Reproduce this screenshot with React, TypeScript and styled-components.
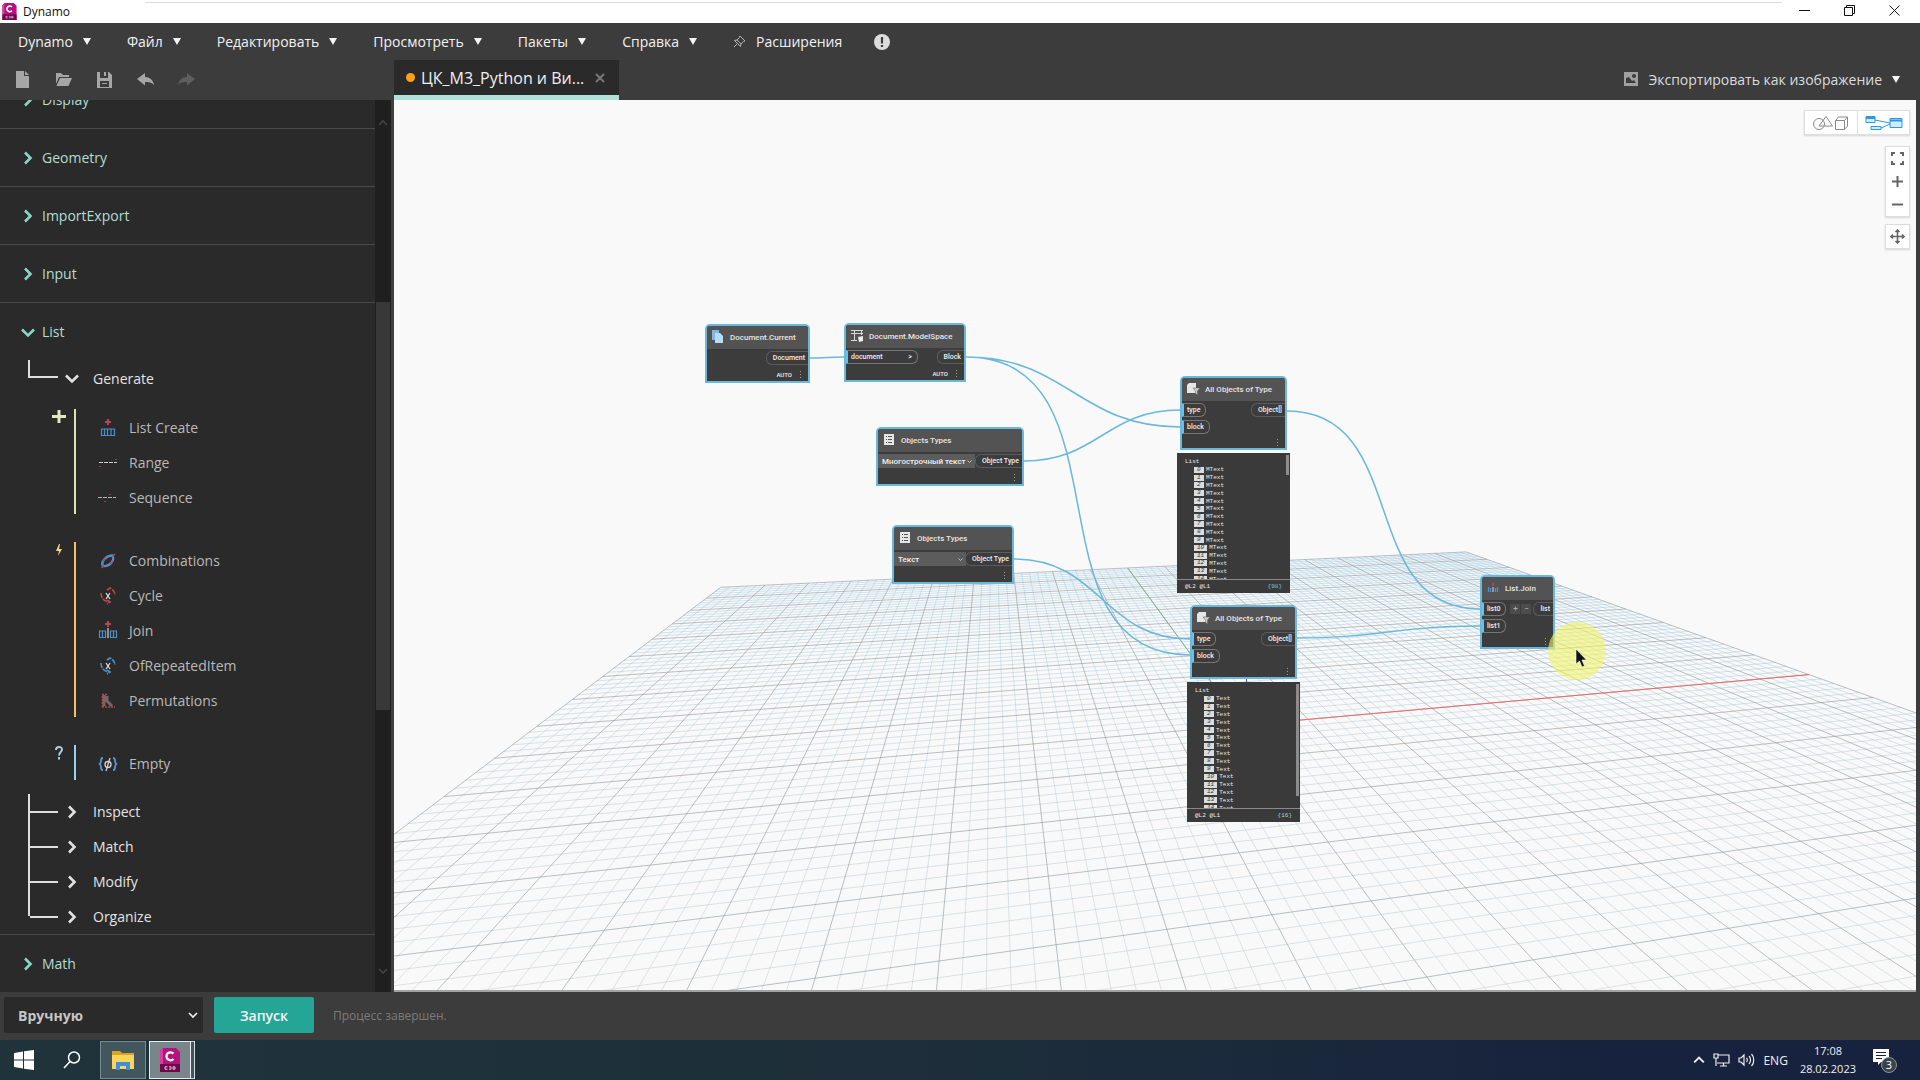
import React from "react";
import styled, { createGlobalStyle } from "styled-components";

const ui = `"Open Sans", "Noto Sans", sans-serif`;
const condensed = `Roboto, "Noto Sans", sans-serif`;
const mono = `"Liberation Mono", monospace`;
const blue = "#6ab8dc";

const GlobalStyle = createGlobalStyle`
  *, *::before, *::after { box-sizing: border-box; }
  body { margin: 0; background: #3c3c3c; font-family: ${ui}; }
  button, select { font: inherit; color: inherit; border: 0; padding: 0; margin: 0; background: none; }
  ul { list-style: none; margin: 0; padding: 0; }
  svg { display: block; flex: none; }
`;

const Page = styled.div`
  display: flex;
  flex-direction: column;
  height: 100vh;
  overflow: hidden;
`;

/* ---------- window frame ---------- */

const TitleBar = styled.div`
  display: flex;
  align-items: stretch;
  height: 23px;
  flex: none;
  background: #fff;
  color: #111;
  font-size: 12px;
`;
const AppName = styled.div`
  display: flex;
  align-items: center;
  gap: 6px;
  width: 145px;
  flex: none;
  padding-left: 2px;
`;
const TitleLine = styled.div`
  flex: 1;
  border-bottom: 1px solid #dcdcdc;
  height: 3px;
`;
const WindowButtons = styled.div`
  display: flex;
  padding-right: 3px;
`;
const WindowButton = styled.button`
  display: grid;
  place-items: center;
  width: 45px;
  padding-bottom: 3px;
`;

/* ---------- header ---------- */

const MenuBar = styled.nav`
  display: flex;
  align-items: center;
  height: 37px;
  flex: none;
  padding-left: 18px;
  gap: 36px;
  color: #f2f2f2;
  font-size: 14px;
`;
const MenuExtras = styled.div`
  display: flex;
  align-items: center;
  gap: 32px;
`;
const MenuButton = styled.button`
  display: flex;
  align-items: center;
  gap: 10px;
`;
const Caret = styled.span`
  border: 4px solid transparent;
  border-top: 7px solid #f4f4f4;
  border-bottom: 0;
`;
const ToolRow = styled.div`
  display: flex;
  height: 40px;
  flex: none;
`;
const Tools = styled.div`
  display: flex;
  align-items: center;
  gap: 24px;
  width: 394px;
  padding: 0 0 2px 14px;
`;
const ToolButton = styled.button`
  display: grid;
  place-items: center;
  width: 17px;
  height: 20px;
`;
const Tab = styled.div`
  display: flex;
  align-items: center;
  width: 225px;
  padding-left: 12px;
  gap: 6px;
  background: #2a2a2a;
  border-bottom: 5px solid #b0e1d6;
  color: #f0f0f0;
  font-size: 16px;
`;
const Dot = styled.span`
  width: 9px;
  height: 9px;
  border-radius: 50%;
  background: #f9a11b;
`;
const TabName = styled.span`
  flex: none;
  width: 168px;
  white-space: nowrap;
`;
const ExportButton = styled.button`
  display: flex;
  align-items: center;
  gap: 10px;
  margin-left: auto;
  padding: 0 20px 2px 0;
  color: #dcdcdc;
  font-size: 14px;
`;

/* ---------- library ---------- */

const Work = styled.div`
  display: flex;
  flex: 1;
  min-height: 0;
`;
const Library = styled.aside`
  display: flex;
  width: 394px;
  flex: none;
  background: #2a2a2a;
  border-right: 3px solid #3f3f3f;
  overflow: hidden;
`;
const LibraryList = styled.div`
  flex: 1;
  margin-top: -29px;
`;
const Category = styled.button<{ $open?: boolean }>`
  display: flex;
  align-items: center;
  gap: 7px;
  width: 100%;
  height: 58px;
  padding-left: 21px;
  border-bottom: 1px solid ${(p) => (p.$open ? "transparent" : "#4a4a4a")};
  color: #b3ddd3;
  font-size: 14px;
`;
const Branch = styled.button`
  display: flex;
  align-items: center;
  gap: 14px;
  width: 100%;
  height: 35px;
  color: #e4e4e4;
  font-size: 14px;
`;
const Generate = styled(Branch)`
  height: 34px;
  padding-left: 28px;
`;
const Elbow = styled.span`
  width: 30px;
  height: 18px;
  margin: 0 -7px 18px 0;
  border-left: 2px solid #dedede;
  border-bottom: 2px solid #dedede;
`;
const NodeGroup = styled.section<{ $first?: boolean }>`
  display: flex;
  margin-top: ${(p) => (p.$first ? 14 : 28)}px;
  padding-left: 51px;
`;
const GroupMark = styled.div`
  width: 23px;
`;
const GroupItems = styled.ul<{ $tone: string }>`
  flex: 1;
  border-left: 2px solid ${(p) => p.$tone};
`;
const GroupItem = styled.li`
  height: 35px;
  padding-left: 22px;
`;
const ItemButton = styled.button`
  display: flex;
  align-items: center;
  gap: 11px;
  height: 37px;
  color: #b9b9b9;
  font-size: 14px;
`;
const Branches = styled.ul`
  margin-top: 14px;
  padding-left: 28px;
  border-bottom: 1px solid #4a4a4a;
`;
const BranchRow = styled.li`
  border-left: 2px solid #dedede;
  &:last-child { border-image: linear-gradient(#dedede 50%, transparent 50%) 1; }
`;
const Twig = styled.span`
  width: 28px;
  height: 2px;
  margin-right: -7px;
  background: #dedede;
`;
const ScrollTrack = styled.div`
  display: flex;
  flex-direction: column;
  align-items: center;
  justify-content: space-between;
  width: 16px;
  padding: 18px 0 16px;
  background: #1f1f1f;
`;
const ScrollThumb = styled.div`
  width: 14px;
  height: 408px;
  margin: 0 0 82px;
  background: #383838;
`;

/* ---------- workspace ---------- */

const Workspace = styled.main`
  position: relative;
  flex: 1;
  margin-right: 4px;
  background: #f9f9f9;
  border-bottom: 2px solid #a3a3a3;
  overflow: hidden;
`;
const Backdrop = styled.svg`
  position: absolute;
  inset: 0;
`;
const Placed = styled.div<{ $x: number; $y: number }>`
  position: absolute;
  left: ${(p) => p.$x}px;
  top: ${(p) => p.$y}px;
`;
const NodeBox = styled(Placed)<{ $w: number }>`
  width: ${(p) => p.$w}px;
  background: #3c3c3c;
  border: 2px solid ${blue};
  border-radius: 5px 5px 0 0;
  color: #f0f0f0;
  font-family: ${condensed};
  font-size: 7px;
  font-weight: 500;
`;
const NodeTitle = styled.div`
  display: flex;
  align-items: center;
  gap: 5px;
  height: 23px;
  padding: 0 0 1px 5px;
  background: #535353;
  border-radius: 3px 3px 0 0;
  color: #e6e6e6;
  font-size: 8px;
  white-space: nowrap;
`;
const NodeBody = styled.div`
  display: grid;
  gap: 3px;
  padding-top: 2px;
`;
const PortRow = styled.div`
  display: flex;
  align-items: center;
  height: 14px;
`;
const InPort = styled.span<{ $wide?: boolean }>`
  display: flex;
  align-items: center;
  justify-content: space-between;
  height: 14px;
  width: ${(p) => (p.$wide ? "72px" : "auto")};
  padding: 0 5px 0 3px;
  border: 1px solid #777;
  border-left: 2px solid #6ac0ea;
  border-radius: 0 6px 6px 0;
`;
const OutPort = styled.span`
  display: flex;
  align-items: center;
  height: 14px;
  margin-left: auto;
  padding: 0 3px 0 6px;
  border: 1px solid #5c5c5c;
  border-right: 0;
  border-radius: 6px 0 0 6px;
  white-space: nowrap;
`;
const NodeSelect = styled.select<{ $w: number }>`
  appearance: none;
  width: ${(p) => p.$w}px;
  height: 14px;
  padding: 0 4px;
  background: #5c5c5c;
  font-size: 8px;
`;
const SelectWrap = styled.span`
  display: flex;
  align-items: center;
  svg { margin-left: -8px; pointer-events: none; }
`;
const NodeFoot = styled.div<{ $short?: boolean }>`
  display: flex;
  align-items: center;
  justify-content: flex-end;
  gap: 8px;
  height: ${(p) => (p.$short ? 11 : 13)}px;
  padding-right: 6px;
  font-size: 6px;
`;
const ListButtons = styled.span`
  display: flex;
  gap: 1px;
  margin-left: 4px;
`;
const ListButton = styled.button`
  width: 10px;
  height: 10px;
  background: #4c4c4c;
  color: #aaa;
  font-size: 8px;
  line-height: 8px;
`;

const Watch = styled(Placed)`
  width: 113px;
  background: #3a3a3a;
  color: #ececec;
  font-family: ${mono};
  font-size: 6px;
  line-height: 8px;
`;
const WatchBody = styled.div`
  display: flex;
  justify-content: space-between;
  height: 127px;
  padding: 2px 1px 0 8px;
  border-bottom: 1px solid #8a8a8a;
  overflow: hidden;
`;
const WatchList = styled.div`
  padding-top: 3px;
`;
const WatchItems = styled.ul`
  display: grid;
  grid-auto-rows: 1fr;
  height: 117px;
  padding-left: 9px;
  line-height: 7px;
`;
const WatchItem = styled.li`
  display: flex;
  align-items: center;
  gap: 2px;
`;
const Index = styled.span`
  min-width: 10px;
  padding: 0 3px;
  background: #dcdcdc;
  color: #333;
  font-style: italic;
  line-height: 6px;
`;
const WatchThumb = styled.span<{ $h: number }>`
  width: 3px;
  height: ${(p) => p.$h}px;
  background: #8c8c8c;
`;
const WatchFoot = styled.div`
  display: flex;
  justify-content: space-between;
  align-items: center;
  height: 13px;
  padding: 0 8px;
`;
const Count = styled.span<{ $tone: string }>`
  color: ${(p) => p.$tone};
`;

const Overlay = styled.div`
  position: absolute;
  top: 10px;
  right: 6px;
  display: flex;
  flex-direction: column;
  align-items: flex-end;
`;
const Panel = styled.div<{ $column?: boolean; $gap: number }>`
  display: flex;
  flex-direction: ${(p) => (p.$column ? "column" : "row")};
  margin-bottom: ${(p) => p.$gap}px;
  background: #fff;
  border: 1px solid #dedede;
  box-shadow: 0 1px 2px rgba(0, 0, 0, 0.15);
`;
const ViewButton = styled.button`
  display: grid;
  place-items: center;
  width: 52px;
  height: 23px;
  & + & { border-left: 1px solid #dedede; }
`;
const ZoomButton = styled.button`
  display: grid;
  place-items: center;
  width: 23px;
  height: 23px;
`;

/* ---------- run bar and taskbar ---------- */

const RunBar = styled.div`
  display: flex;
  align-items: center;
  height: 48px;
  flex: none;
  padding: 0 0 2px 4px;
  background: #3c3c3c;
`;
const RunMode = styled.span`
  display: flex;
  align-items: center;
  margin-right: 16px;
  svg { margin-left: -15px; pointer-events: none; }
`;
const RunSelect = styled.select`
  appearance: none;
  width: 199px;
  height: 36px;
  padding: 0 14px;
  background: #2a2a2a;
  border-radius: 2px;
  color: #c6c6c6;
  font-size: 14px;
  font-weight: 700;
`;
const RunButton = styled.button`
  width: 100px;
  height: 36px;
  background: #25a596;
  border-radius: 2px;
  color: #f4f4f4;
  font-size: 14px;
  font-weight: 600;
`;
const Status = styled.span`
  margin-left: 19px;
  color: #7b7b7b;
  font-size: 12px;
`;
const Taskbar = styled.footer`
  display: flex;
  align-items: stretch;
  height: 40px;
  flex: none;
  background: linear-gradient(90deg, #20333a, #1d2e3a 50%, #17223e 85%);
  color: #f0f0f0;
  font-size: 12px;
`;
const TaskButton = styled.button<{ $state?: "open" | "active" }>`
  display: grid;
  place-items: center;
  width: ${(p) => (p.$state === "open" ? 46 : p.$state === "active" ? 42 : 48)}px;
  margin: 1px ${(p) => (p.$state === "open" ? 3 : 0)}px 1px ${(p) => (p.$state === "open" ? 4 : 0)}px;
  background: ${(p) => (p.$state === "open" ? "#43555d" : p.$state === "active" ? "#78868c" : "none")};
  border: ${(p) => (p.$state === "open" ? "1px solid #7c8a90" : p.$state === "active" ? "1px solid #e8ecee" : "0")};
`;
const StackEdge = styled.span`
  width: 4px;
  margin: 1px 0;
  border: 1px solid #d5dadd;
  border-left: 0;
  background: #43555d;
`;
const Tray = styled.div`
  display: flex;
  align-items: center;
  gap: 8px;
  margin-left: auto;
  padding-right: 23px;
`;
const Clock = styled.div`
  margin: 0 8px 0 4px;
  font-size: 11px;
  line-height: 18px;
  text-align: center;
`;

/* ---------- icons ---------- */

const Chevron = ({ open, tone = "#e2e2e2" }: { open?: boolean; tone?: string }) => (
  <svg width="14" height="14" viewBox="0 0 14 14" fill="none" stroke={tone} strokeWidth="2.6">
    <path d={open ? "M1 4.5 7 10.5 13 4.5" : "M4 1.5 9.5 7 4 12.5"} />
  </svg>
);
const SmallChevron = ({ size, tone = "#eee", up }: { size: number; tone?: string; up?: boolean }) => (
  <svg width={size} height={size} viewBox="0 0 10 10" fill="none" stroke={tone} strokeWidth="1.7">
    <path d={up ? "M1 7 5 3 9 7" : "M1 3 5 7 9 3"} />
  </svg>
);

const CivilLogo = ({ w, h }: { w: number; h: number }) => (
  <svg width={w} height={h} viewBox="0 0 20 24">
    <path d="M3 0H16L20 4V24H0V3Z" fill="#b5127f" />
    <path d="M3 0V16H0V3Z" fill="#d83ba4" />
    <path d="M0 16H20V24H0Z" fill="#6d0849" />
    <path d="M13.4 5.6A4 4 0 1 0 13.4 11" fill="none" stroke="#fff" strokeWidth="2.3" />
    <path d="M5 18.8H7.5M5 18.8V21.2H7.5M9 18.8H11V21.2H9M13 18.8H15V21.2H13Z" fill="none" stroke="#eac4dc" strokeWidth="1" />
  </svg>
);

const toolIcons: Record<string, React.ReactNode> = {
  New: <path d="M2 1H10V6H15V18H2ZM11 1 15 5H11Z" fill="#a6a6a6" />,
  Open: <path d="M1 3H6L8 5H14V7H4L1 14ZM5 8H17L13.500 16H1.500Z" fill="#a6a6a6" />,
  Save: <path fillRule="evenodd" d="M1 2H13L16 5V18H1ZM4 2V8H12V2H10V6H8V2ZM4 11V17H13V11ZM6 13H11V14H6Z" fill="#a6a6a6" />,
  Undo: <path d="M0 9 8 3V7C13 7 16 10 17 15 14 12 12 12 8 12V15.500Z" fill="#a6a6a6" />,
  Redo: <path d="M17 9 9 3V7C4 7 1 10 0 15 3 12 5 12 9 12V15.500Z" fill="#5e5e5e" />,
};

const red = "#b8474e";
const navy = "#4f8fce";
const itemIcons: Record<string, React.ReactNode> = {
  "List Create": (
    <g fill="none">
      <path d="M10 1V7M7 4H13" stroke={red} strokeWidth="2" />
      <path d="M3 11H17M3.500 11V18M6.500 11V18M9.500 11V18M13 11V18M16.500 11V18M3 17.500H17" stroke={navy} strokeWidth="1.200" />
    </g>
  ),
  Range: (
    <g>
      <path d="M1 9.500H19" stroke="#cfcfcf" strokeDasharray="4 1" />
      <path d="M2 13V14M18 6V7" stroke={red} strokeWidth="1.500" />
    </g>
  ),
  Sequence: (
    <g>
      <path d="M0 9.500H18" stroke="#b5b5b5" strokeDasharray="4 1" />
      <path d="M7 13V14M12 6V7" stroke={red} strokeWidth="1.500" />
    </g>
  ),
  Combinations: (
    <g fill="none">
      <path d="M5 15C2.500 11 8 4.500 14.500 4.500 17 9 12 16 5 15Z" stroke={navy} strokeWidth="2.400" />
      <path d="M3.500 17 6 14M5 10 8 7M12 13 15 10M14 6 17 3" stroke={red} strokeWidth="1.400" />
    </g>
  ),
  Cycle: (
    <g fill="none">
      <path d="M9 4 12 2C16 4 17 7 17 9M3 7C3 12 6 15 11 16M9 14 12 16 9 18" stroke={red} strokeWidth="1.600" strokeDasharray="5 1" />
      <path d="M8 7 12 13M12 7 8 13" stroke="#e5e5e5" strokeWidth="1.200" />
    </g>
  ),
  Join: (
    <g fill="none">
      <path d="M10 0V6M7 3H13" stroke={red} strokeWidth="2" />
      <path d="M1 10H8M12 10H19M1.500 10V17M4.500 10V17M7.500 10V17M12.500 10V17M15.500 10V17M18.500 10V17M1 16.500H8M12 16.500H19" stroke={navy} strokeWidth="1.200" />
      <path d="M10 7V17" stroke="#d5d5d5" strokeWidth="1.200" />
    </g>
  ),
  OfRepeatedItem: (
    <g fill="none">
      <path d="M9 4 12 2C16 4 17 7 17 9M3 7C3 12 6 15 11 16M9 14 12 16 9 18" stroke={navy} strokeWidth="1.600" strokeDasharray="5 1" />
      <path d="M8 7 12 13M12 7 8 13" stroke="#e5e5e5" strokeWidth="1.200" />
    </g>
  ),
  Permutations: (
    <g fill="none">
      <path d="M6 4V15M9 5V10L14 15" stroke="#75676b" strokeWidth="3" />
      <path d="M4 3.500H10M4.500 5V16M4 16H17" stroke={red} strokeWidth="1.600" strokeDasharray="2 1" />
    </g>
  ),
  Empty: (
    <g fill="none">
      <path d="M5 4C1 4 5 9 1 10 5 11 1 16 5 16M15 4C19 4 15 9 19 10 15 11 19 16 15 16" stroke="#5596d3" strokeWidth="1.800" />
      <circle cx="10" cy="10.500" r="3" stroke="#d0d0d0" strokeWidth="1.300" />
      <path d="M12 4 8 17" stroke="#d0d0d0" strokeWidth="1.300" />
    </g>
  ),
};

const nodeIcons: Record<string, React.ReactNode> = {
  copy: (
    <g>
      <path d="M0 0H7V10H0Z" fill="#7fb7e6" />
      <path d="M3 3H8L11 6V13H3Z" fill="#b9dcf7" />
    </g>
  ),
  space: (
    <g>
      <path d="M0 1.500H12M0 4.500H12M3.500 1V12M10.500 1V6M0 11.500H6" stroke="#d8d8d8" fill="none" />
      <path d="M7 8 12 7V12L8 13Z" fill="#eee" />
    </g>
  ),
  types: (
    <g>
      <path d="M1 1H11V12H1Z" fill="#e6e6e6" />
      <path d="M3 3.500H4M3 6.500H4M3 9.500H4M5 3.500H9M5 6.500H9M5 9.500H9" stroke="#555" />
    </g>
  ),
  filter: (
    <g>
      <path d="M0 3 2 1H9V11H0Z" fill="#e6e6e6" />
      <path d="M6 6H13L10.500 9V13L8.500 11.500V9Z" fill="#cfcfcf" stroke="#535353" strokeWidth="0.500" />
    </g>
  ),
  join: (
    <g>
      <path d="M6 2V5" stroke="#c44" strokeWidth="1.500" />
      <path d="M1.500 6V11M3.500 7V11M8.500 7V11M10.500 6V11" stroke={navy} strokeWidth="1.300" />
      <path d="M6 6V11" stroke="#ddd" />
    </g>
  ),
};

/* ---------- background grid ---------- */

// Projects a ground-plane position, counted in major cells, onto the view.
const depth = (u: number, v: number) => 1 + 0.01015 * u - 0.0505 * v;
const project = (u: number, v: number) => {
  const w = depth(u, v);
  return `${((720.7 + 52.15 * u - 50.09 * v) / w).toFixed(1)} ${((587.3 + 3.83 * u - 19.3 * v) / w).toFixed(1)}`;
};
const alongV = (u: number, end = 20) =>
  `M${project(u, 0)}L${project(u, Math.min(end, (0.97 + 0.01015 * u) / 0.0505))}`;
const alongU = (v: number) =>
  `M${project(Math.max(0, (0.0505 * v - 0.97) / 0.01015), v)}L${project(20, v)}`;

const steps = Array.from({ length: 101 }, (_, i) => i);
const minor = steps.filter((i) => i % 5).map((i) => alongV(i / 5) + alongU(i / 5)).join("");
const major = steps.filter((i) => i % 5 === 0).map((i) => alongV(i / 5) + alongU(i / 5)).join("");

const wire = (x1: number, y1: number, x2: number, y2: number) => {
  const k = Math.hypot(x2 - x1, y2 - y1) * 0.45;
  return `M${x1} ${y1}C${x1 + k} ${y1} ${x2 - k} ${y2} ${x2} ${y2}`;
};
const wires = [
  wire(810, 358, 844, 357),
  wire(966, 357, 1180, 427),
  wire(966, 357, 1190, 655),
  wire(1024, 461, 1180, 410),
  wire(1014, 559, 1190, 639),
  wire(1287, 411, 1480, 609),
  wire(1296, 638, 1480, 626),
];

const Ground = () => (
  <Backdrop width="1522" height="892" viewBox="394 100 1522 892">
    <defs>
      <linearGradient id="minorTone" gradientUnits="userSpaceOnUse" x1="0" y1="550" x2="0" y2="990">
        <stop offset="0" stopColor="#8cc0de" stopOpacity="0.5" />
        <stop offset="0.4" stopColor="#a9c4d2" stopOpacity="0.55" />
        <stop offset="1" stopColor="#c4c9cc" stopOpacity="0.65" />
      </linearGradient>
    </defs>
    <path d={minor} stroke="url(#minorTone)" strokeWidth="0.800" fill="none" />
    <path d={major} stroke="#8b959a" strokeOpacity="0.650" strokeWidth="0.900" fill="none" />
    <path d={`M${project(10, 0)}L${project(10, 10)}`} stroke="#7fb58c" fill="none" />
    <path d={`M${project(10, 10)}L${project(20, 10)}`} stroke="#ea6a6a" fill="none" />
    <path d="M1246.500 670V724" stroke="#4a5fa0" fill="none" />
    <path d={wires.join("")} stroke={blue} strokeWidth="1.500" fill="none" />
  </Backdrop>
);

/* ---------- graph nodes ---------- */

type GraphNodeProps = {
  x: number; y: number; w: number; icon: string; title: string;
  auto?: boolean; tall?: boolean; children: React.ReactNode;
};
const GraphNode = ({ x, y, w, icon, title, auto, tall, children }: GraphNodeProps) => (
  <NodeBox $x={x - 394} $y={y - 100} $w={w}>
    <NodeTitle>
      <svg width="13" height="14" viewBox="0 0 13 14">{nodeIcons[icon]}</svg>
      {title}
    </NodeTitle>
    <NodeBody>
      {children}
      <NodeFoot $short={tall}>
        {auto && "AUTO"}
        <svg width="2" height="9" fill="#9a9a9a"><path d="M0 1H1V2H0ZM0 4H1V5H0ZM0 7H1V8H0Z" /></svg>
      </NodeFoot>
    </NodeBody>
  </NodeBox>
);

const TypeNode = ({ x, y, w, value, sw }: { x: number; y: number; w: number; value: string; sw: number }) => (
  <GraphNode x={x} y={y} w={w} icon="types" title="Objects Types">
    <PortRow>
      <SelectWrap>
        <NodeSelect $w={sw} aria-label="Object type" defaultValue={value}>
          <option>{value}</option>
        </NodeSelect>
        <SmallChevron size={5} tone="#ccc" />
      </SelectWrap>
      <OutPort>Object Type</OutPort>
    </PortRow>
  </GraphNode>
);

const FilterNode = ({ x, y }: { x: number; y: number }) => (
  <GraphNode x={x} y={y} w={107} icon="filter" title="All Objects of Type" tall>
    <PortRow><InPort>type</InPort><OutPort>Object[]</OutPort></PortRow>
    <PortRow><InPort>block</InPort></PortRow>
  </GraphNode>
);

const WatchPanel = ({ x, y, text, count, tone, thumb }: { x: number; y: number; text: string; count: number; tone: string; thumb: number }) => (
  <Watch $x={x - 394} $y={y - 100}>
    <WatchBody>
      <WatchList>
        List
        <WatchItems>
          {Array.from({ length: 15 }, (_, i) => (
            <WatchItem key={i}><Index>{i}</Index>{text}</WatchItem>
          ))}
        </WatchItems>
      </WatchList>
      <WatchThumb $h={thumb} />
    </WatchBody>
    <WatchFoot><span>@L2 @L1</span><Count $tone={tone}>{`{${count}}`}</Count></WatchFoot>
  </Watch>
);

/* ---------- library data ---------- */

const groups = [
  {
    tone: "#dce3b4",
    mark: <path d="M8 1V14M1 7.500H15" stroke="#e3e8bd" strokeWidth="3" />,
    items: ["List Create", "Range", "Sequence"],
  },
  {
    tone: "#f5c066",
    mark: <path d="M8 2 5 9H8L7 14 11 7H8L9 2Z" fill="#f3d488" />,
    items: ["Combinations", "Cycle", "Join", "OfRepeatedItem", "Permutations"],
  },
  {
    tone: "#9ad2ec",
    mark: <path d="M5 5C5 1 11 1 11 4.500 11 7 8 7 8 10.500M8 12V14.500" fill="none" stroke="#a9cfe2" strokeWidth="2" />,
    items: ["Empty"],
  },
];

export default function App() {
  return (
    <Page>
      <GlobalStyle />
      <TitleBar>
        <AppName><CivilLogo w={15} h={17} />Dynamo</AppName>
        <TitleLine />
        <WindowButtons>
          <WindowButton aria-label="Minimize"><svg width="11" height="11"><path d="M0 5.500H11" stroke="#111" /></svg></WindowButton>
          <WindowButton aria-label="Restore"><svg width="11" height="11" fill="none" stroke="#111"><path d="M.5 2.500H8.500V10.500H.5ZM2.500 2.500V.5H10.500V8.500H8.500" /></svg></WindowButton>
          <WindowButton aria-label="Close"><svg width="11" height="11" stroke="#111"><path d="M.5.5 10.500 10.500M10.500.5.5 10.500" /></svg></WindowButton>
        </WindowButtons>
      </TitleBar>

      <MenuBar>
        {["Dynamo", "Файл", "Редактировать", "Просмотреть", "Пакеты", "Справка"].map((m) => (
          <MenuButton key={m}>{m}<Caret /></MenuButton>
        ))}
        <MenuExtras>
          <MenuButton>
            <svg width="13" height="13" viewBox="0 0 13 13" fill="none" stroke="#b5b5b5"><path d="M7 1 12 6 10.500 6.500 8 9 7.500 11.500 1.500 5.500 4 5 6.500 2.500ZM4.500 8.500 1 12M4 5 8 9" /></svg>
            Расширения
          </MenuButton>
          <MenuButton aria-label="Notifications">
            <svg width="16" height="16"><circle cx="8" cy="8" r="8" fill="#dcdcdc" /><path d="M8 3V9.500M8 11V13" stroke="#3c3c3c" strokeWidth="2.200" /></svg>
          </MenuButton>
        </MenuExtras>
      </MenuBar>

      <ToolRow>
        <Tools>
          {Object.keys(toolIcons).map((name) => (
            <ToolButton key={name} aria-label={name}><svg width="17" height="19" viewBox="0 0 17 19">{toolIcons[name]}</svg></ToolButton>
          ))}
        </Tools>
        <Tab>
          <Dot />
          <TabName>ЦК_М3_Python и Ви...</TabName>
          <button aria-label="Close tab"><svg width="10" height="10" stroke="#777" strokeWidth="2"><path d="M1 1 9 9M9 1 1 9" /></svg></button>
        </Tab>
        <ExportButton>
          <svg width="14" height="14"><path d="M0 0H14V14H0Z" fill="#a0a0a0" /><path d="M2 11V6L5 5 8 9 10 8 12 11Z" fill="#3c3c3c" /><circle cx="10" cy="4" r="2" fill="#3c3c3c" /></svg>
          Экспортировать как изображение
          <Caret />
        </ExportButton>
      </ToolRow>

      <Work>
        <Library>
          <LibraryList>
            {["Display", "Geometry", "ImportExport", "Input"].map((c) => (
              <Category key={c}><Chevron tone="#8ad6c4" />{c}</Category>
            ))}
            <Category $open><Chevron open tone="#8ad6c4" />List</Category>
            <Generate><Elbow /><Chevron open />Generate</Generate>
            {groups.map((g, i) => (
              <NodeGroup key={g.tone} $first={i === 0}>
                <GroupMark><svg width="16" height="16" viewBox="0 0 16 16">{g.mark}</svg></GroupMark>
                <GroupItems $tone={g.tone}>
                  {g.items.map((name) => (
                    <GroupItem key={name}>
                      <ItemButton><svg width="20" height="20" viewBox="0 0 20 20">{itemIcons[name]}</svg>{name}</ItemButton>
                    </GroupItem>
                  ))}
                </GroupItems>
              </NodeGroup>
            ))}
            <Branches>
              {["Inspect", "Match", "Modify", "Organize"].map((b) => (
                <BranchRow key={b}><Branch><Twig /><Chevron />{b}</Branch></BranchRow>
              ))}
            </Branches>
            <Category $open><Chevron tone="#8ad6c4" />Math</Category>
          </LibraryList>
          <ScrollTrack>
            <SmallChevron size={10} tone="#444" up />
            <ScrollThumb />
            <SmallChevron size={10} tone="#444" />
          </ScrollTrack>
        </Library>

        <Workspace>
          <Ground />
          <GraphNode x={705} y={324} w={105} icon="copy" title="Document.Current" auto>
            <PortRow><OutPort>Document</OutPort></PortRow>
          </GraphNode>
          <GraphNode x={844} y={323} w={122} icon="space" title="Document.ModelSpace" auto>
            <PortRow><InPort $wide>document<span>&gt;</span></InPort><OutPort>Block</OutPort></PortRow>
          </GraphNode>
          <TypeNode x={876} y={427} w={148} value="Многострочный текст" sw={97} />
          <TypeNode x={892} y={525} w={122} value="Текст" sw={72} />
          <FilterNode x={1180} y={376} />
          <WatchPanel x={1177} y={453} text="MText" count={98} tone="#6cc0ee" thumb={20} />
          <FilterNode x={1190} y={605} />
          <WatchPanel x={1187} y={682} text="Text" count={16} tone="#9fd8d0" thumb={112} />
          <GraphNode x={1480} y={575} w={75} icon="join" title="List.Join" tall>
            <PortRow>
              <InPort>list0</InPort>
              <ListButtons><ListButton>+</ListButton><ListButton>−</ListButton></ListButtons>
              <OutPort>list</OutPort>
            </PortRow>
            <PortRow><InPort>list1</InPort></PortRow>
          </GraphNode>
          <Placed $x={1154} $y={522}>
            <svg width="58" height="58">
              <circle cx="29" cy="29" r="29" fill="#f0f468" fillOpacity="0.600" />
              <path d="M28 27V42L31.500 39 34 45 36.500 44 34 38H38.500Z" fill="#111" stroke="#fff" strokeWidth="0.600" />
            </svg>
          </Placed>
          <Overlay>
            <Panel $gap={11}>
              <ViewButton aria-label="3D view">
                <svg width="38" height="16" fill="none" stroke="#8a8a8a"><circle cx="7" cy="9" r="5.500" /><path d="M7 11 14 1.500 20.500 11ZM23.500 5.500H32.500V14.500H23.500ZM23.500 5.500 26.500 2H35.500V11L32.500 14.500M32.500 5.500 35.500 2" /></svg>
              </ViewButton>
              <ViewButton aria-label="Graph view">
                <svg width="38" height="16" stroke="#2f96e6" fill="#d4ebfc"><path d="M10 5 25 8M16 13 25 9" fill="none" /><path d="M1 1.500H10V7.500H1ZM6 11.500H16V14.500H6ZM25 3.500H37V12.500H25Z" /><path d="M1 3H10M25 5.500H37" strokeWidth="2" /></svg>
              </ViewButton>
            </Panel>
            <Panel $column $gap={7}>
              <ZoomButton aria-label="Fit"><svg width="13" height="13" fill="none" stroke="#666" strokeWidth="2"><path d="M1 4V1H4M9 1H12V4M12 9V12H9M4 12H1V9" /></svg></ZoomButton>
              <ZoomButton aria-label="Zoom in"><svg width="11" height="11" stroke="#666" strokeWidth="2"><path d="M5.500 0V11M0 5.500H11" /></svg></ZoomButton>
              <ZoomButton aria-label="Zoom out"><svg width="11" height="11" stroke="#666" strokeWidth="2"><path d="M0 5.500H11" /></svg></ZoomButton>
            </Panel>
            <Panel $gap={0}>
              <ZoomButton aria-label="Pan"><svg width="15" height="15" fill="none" stroke="#666" strokeWidth="1.600"><path d="M7.500 1V14M1 7.500H14M5.500 3 7.500 1 9.500 3M5.500 12 7.500 14 9.500 12M3 5.500 1 7.500 3 9.500M12 5.500 14 7.500 12 9.500" /></svg></ZoomButton>
            </Panel>
          </Overlay>
        </Workspace>
      </Work>

      <RunBar>
        <RunMode>
          <RunSelect aria-label="Run mode" defaultValue="Вручную"><option>Вручную</option></RunSelect>
          <SmallChevron size={10} />
        </RunMode>
        <RunButton>Запуск</RunButton>
        <Status>Процесс завершен.</Status>
      </RunBar>

      <Taskbar>
        <TaskButton aria-label="Start">
          <svg width="20" height="20" fill="#fff"><path d="M0 3 9 1.500V9.500H0ZM10 1.300 20 0V9.500H10ZM0 10.500H9V18.500L0 17ZM10 10.500H20V20L10 18.700Z" /></svg>
        </TaskButton>
        <TaskButton aria-label="Search">
          <svg width="18" height="18" fill="none" stroke="#fff" strokeWidth="1.500"><circle cx="11" cy="6.500" r="5.500" /><path d="M7 10.500 1 17" /></svg>
        </TaskButton>
        <TaskButton $state="open" aria-label="Explorer">
          <svg width="24" height="20"><path d="M1 1H9L11 3H23V19H1Z" fill="#d9a520" /><path d="M1 5H23V19H1Z" fill="#fbd55b" /><path d="M5 12H19V20H15V16H9V20H5Z" fill="#3f8fdc" /></svg>
        </TaskButton>
        <TaskButton $state="active" aria-label="Civil 3D"><CivilLogo w={20} h={24} /></TaskButton>
        <StackEdge />
        <Tray>
          <SmallChevron size={12} up />
          <svg width="17" height="14" fill="none" stroke="#eee" strokeWidth="1.200"><path d="M5 2H16V10H4M1 1H5V5H1ZM3 5V13M7 13H14M10.500 10V13" /></svg>
          <svg width="17" height="14" fill="none" stroke="#eee" strokeWidth="1.200"><path d="M1 5H3L6 2V12L3 9H1ZM8.500 5C9.500 6 9.500 8 8.500 9M11 3C13 5 13 9 11 11M13.500 1C16.500 4 16.500 10 13.500 13" /></svg>
          <span>ENG</span>
          <Clock>17:08<br />28.02.2023</Clock>
          <svg width="25" height="25">
            <path d="M1 1H17V14H9L6 17V14H1Z" fill="#fff" />
            <path d="M4 4.500H14M4 7.500H14M4 10.500H10" stroke="#17223e" />
            <circle cx="17" cy="17" r="7.500" fill="#3a424c" stroke="#8d949c" />
            <text x="17" y="21" fill="#fff" fontSize="11" textAnchor="middle">3</text>
          </svg>
        </Tray>
      </Taskbar>
    </Page>
  );
}
